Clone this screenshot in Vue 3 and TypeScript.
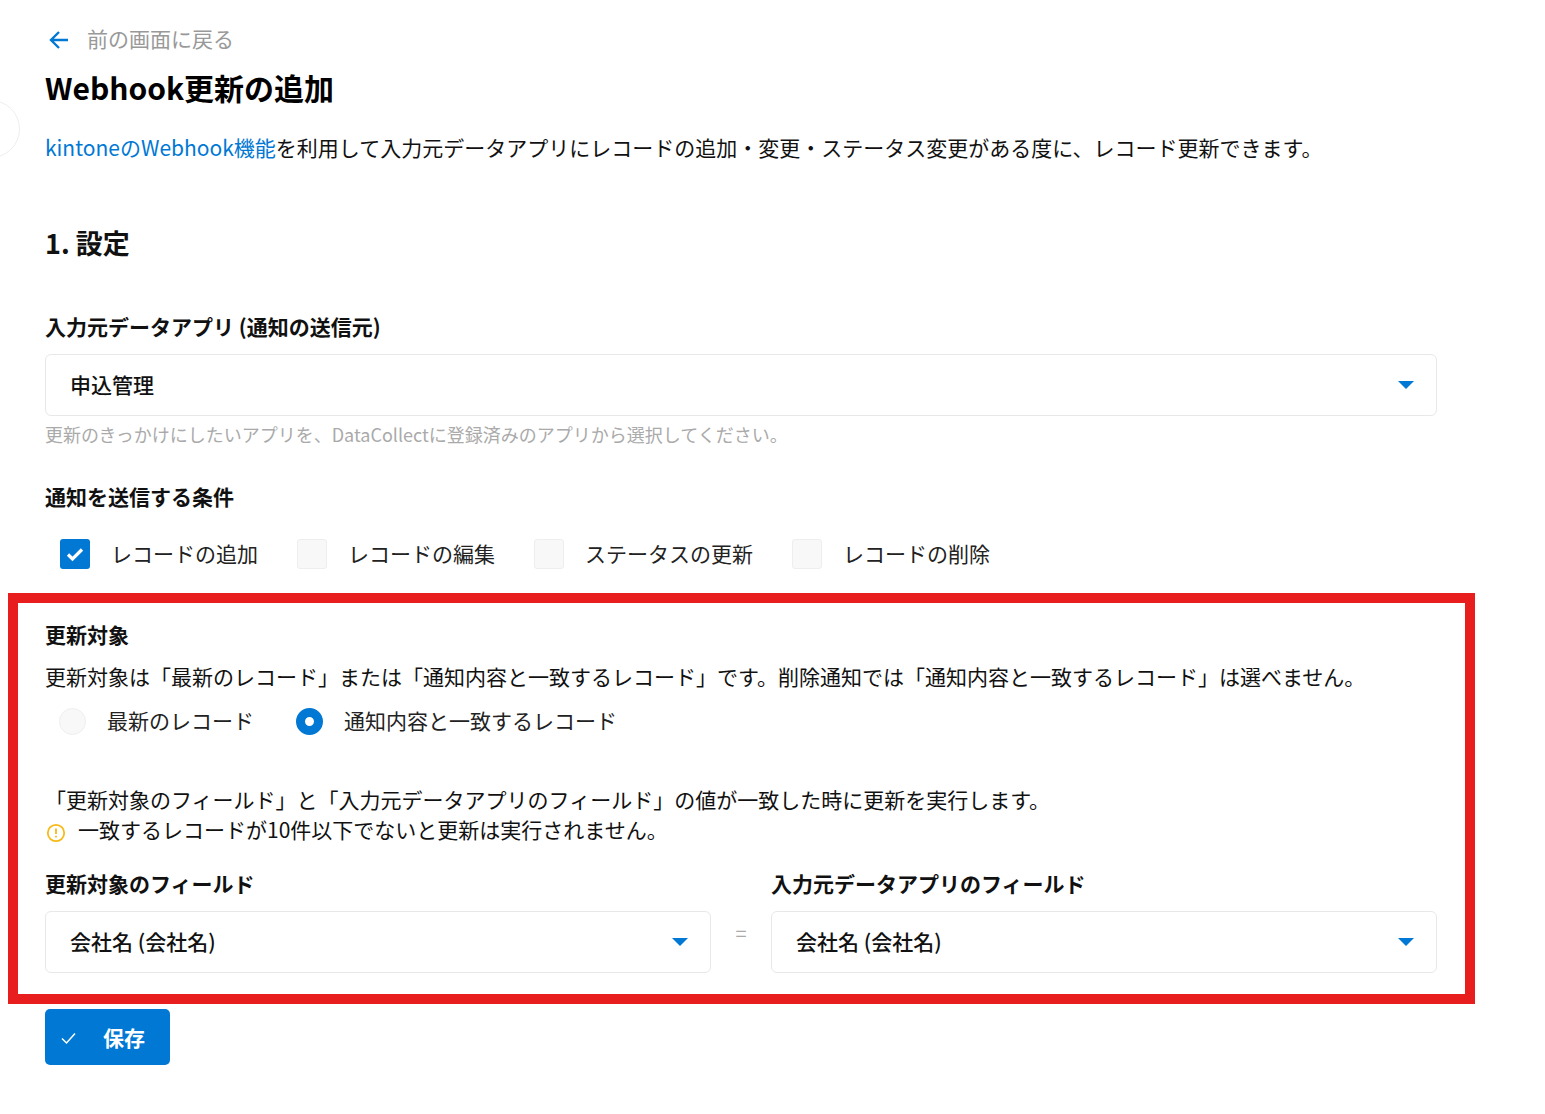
<script setup lang="ts">
const checks = [
  { label: 'レコードの追加', on: true },
  { label: 'レコードの編集', on: false },
  { label: 'ステータスの更新', on: false },
  { label: 'レコードの削除', on: false },
]
</script>

<template>
  <div class="page">
    <div class="side-tab"></div>
    <div class="back">
      <svg class="back-icon" viewBox="0 0 24 24" width="24" height="24"><path d="M21 12H4M12 4l-8 8 8 8" fill="none" stroke="#0078d4" stroke-width="2.400" /></svg>
      <span>前の画面に戻る</span>
    </div>
    <h1>Webhook更新の追加</h1>
    <p class="intro"><span class="link">kintoneのWebhook機能</span>を利用して入力元データアプリにレコードの追加・変更・ステータス変更がある度に、レコード更新できます。</p>
    <h2>1. 設定</h2>
    <div class="label first">入力元データアプリ (通知の送信元)</div>
    <div class="select"><span>申込管理</span><i class="caret"></i></div>
    <div class="hint">更新のきっかけにしたいアプリを、DataCollectに登録済みのアプリから選択してください。</div>
    <div class="label cond">通知を送信する条件</div>
    <div class="checks">
      <div v-for="c in checks" :key="c.label" class="check">
        <span class="box" :class="{ on: c.on }">
          <svg v-if="c.on" viewBox="0 0 30 30" width="30" height="30"><path d="M8 15.500l4.500 4.500L22 10.500" fill="none" stroke="#fff" stroke-width="3.200" /></svg>
        </span>
        <span class="opt">{{ c.label }}</span>
      </div>
    </div>
    <section class="target">
      <div class="label">更新対象</div>
      <p class="desc">更新対象は「最新のレコード」または「通知内容と一致するレコード」です。削除通知では「通知内容と一致するレコード」は選べません。</p>
      <div class="radios">
        <div class="radio"><span class="dot"></span><span class="opt">最新のレコード</span></div>
        <div class="radio"><span class="dot on"></span><span class="opt">通知内容と一致するレコード</span></div>
      </div>
      <p class="note">「更新対象のフィールド」と「入力元データアプリのフィールド」の値が一致した時に更新を実行します。</p>
      <p class="warn">
        <svg viewBox="0 0 20 20" width="20" height="20"><circle cx="10" cy="10" r="8.200" fill="none" stroke="#f7b916" stroke-width="1.800" /><path d="M10 5.500v5.500M10 12.800v1.700" stroke="#f7b916" stroke-width="1.800" /></svg>
        <span>一致するレコードが10件以下でないと更新は実行されません。</span>
      </p>
      <div class="fields">
        <div class="field">
          <div class="label">更新対象のフィールド</div>
          <div class="select"><span>会社名 (会社名)</span><i class="caret"></i></div>
        </div>
        <div class="eq">=</div>
        <div class="field">
          <div class="label">入力元データアプリのフィールド</div>
          <div class="select"><span>会社名 (会社名)</span><i class="caret"></i></div>
        </div>
      </div>
    </section>
    <button class="save">
      <svg viewBox="0 0 20 20" width="20" height="20"><path d="M3 10.500l4.500 4.500L16 5.500" fill="none" stroke="#fff" stroke-width="1.500" /></svg>
      <span>保存</span>
    </button>
  </div>
</template>

<style scoped>
.page {
  position: relative;
  width: 1545px;
  height: 1114px;
  box-sizing: border-box;
  padding: 25px 0 0 45px;
  font-family: "Noto Sans CJK JP", "Noto Sans", sans-serif;
  color: #111;
  background: #fff;
  overflow: hidden;
  font-size: 21px;
}
.side-tab {
  position: absolute;
  left: -38px;
  top: 100px;
  width: 56px;
  height: 56px;
  border: 1px solid #eee;
  border-radius: 50%;
}
.back {
  display: flex;
  align-items: center;
  gap: 16px;
  height: 26px;
  color: #999;
  font-size: 21px;
}
.back-icon { margin-left: 2px; margin-top: 3px; }
h1 {
  margin: 14px 0 0;
  font-size: 30px;
  line-height: 44px;
  color: #000;
  font-weight: 700;
}
.intro {
  margin: 22px 0 0;
  line-height: 32px;
  font-size: 21px;
  color: #111;
}
.link { color: #0078d4; }
h2 {
  margin: 60px 0 0;
  font-size: 27px;
  line-height: 40px;
  color: #111;
}
.label {
  font-weight: 700;
  font-size: 21px;
  line-height: 28px;
  padding-bottom: 2px;
  color: #111;
}
.label.first { margin-top: 49px; }
.select {
  box-sizing: border-box;
  display: flex;
  align-items: center;
  justify-content: space-between;
  width: 1392px;
  height: 62px;
  margin-top: 12px;
  padding: 0 22px 0 24px;
  border: 1px solid #e8e8e8;
  border-radius: 6px;
  font-size: 21px;
  font-weight: 500;
  color: #111;
}
.select span { margin-bottom: 2px; }
.caret {
  width: 0;
  height: 0;
  border-left: 8px solid transparent;
  border-right: 8px solid transparent;
  border-top: 8px solid #0078d4;
}
.hint {
  margin-top: 5px;
  padding-bottom: 2px;
  font-size: 18px;
  line-height: 26px;
  color: #aaa;
}
.label.cond { margin-top: 33px; }
.checks {
  display: flex;
  margin: 27px 0 0 15px;
  gap: 39px;
}
.check {
  display: flex;
  align-items: center;
  gap: 21px;
  height: 30px;
  color: #222;
  font-size: 21px;
}
.opt { margin-bottom: 2px; }
.box {
  box-sizing: border-box;
  display: block;
  width: 30px;
  height: 30px;
  border: 1px solid #eee;
  border-radius: 3px;
  background: #f8f8f8;
}
.box.on {
  background: #0078d4;
  border: 0;
}
.box svg { display: block; }
.target {
  box-sizing: border-box;
  width: 1467px;
  height: 411px;
  margin: 24px 0 0 -37px;
  padding: 17px 0 0 27px;
  border: 10px solid #e81e1e;
}
.desc {
  margin: 11px 0 0;
  padding-bottom: 2px;
  line-height: 30px;
  font-size: 21px;
  color: #111;
}
.radios {
  display: flex;
  margin: 12px 0 0 14px;
  gap: 42px;
}
.radio {
  display: flex;
  align-items: center;
  gap: 21px;
  height: 32px;
  color: #222;
  font-size: 21px;
}
.dot {
  box-sizing: border-box;
  display: block;
  width: 27px;
  height: 27px;
  border: 1px solid #eee;
  border-radius: 50%;
  background: #f8f8f8;
}
.dot.on {
  border: 9px solid #0078d4;
  background: #fff;
}
.note {
  margin: 48px 0 0;
  padding-bottom: 2px;
  line-height: 28px;
  font-size: 21px;
  color: #111;
}
.warn {
  display: flex;
  align-items: center;
  gap: 12px;
  margin: 0;
  padding-bottom: 2px;
  line-height: 28px;
  font-size: 21px;
  color: #111;
}
.warn svg { margin: 8px 0 0 1px; }
.fields {
  display: flex;
  width: 1392px;
  margin-top: 24px;
}
.field { width: 666px; }
.field .select { width: 666px; }
.eq {
  width: 60px;
  padding-top: 49px;
  text-align: center;
  color: #aaa;
  font-size: 20px;
}
.save {
  display: flex;
  align-items: center;
  gap: 24px;
  width: 125px;
  height: 56px;
  margin-top: 5px;
  padding: 0 0 0 14px;
  border: 0;
  border-radius: 5px;
  background: #0078d4;
  color: #fff;
  font-family: inherit;
  font-size: 21px;
  font-weight: 700;
}
.save svg { margin-top: 2px; }
</style>
